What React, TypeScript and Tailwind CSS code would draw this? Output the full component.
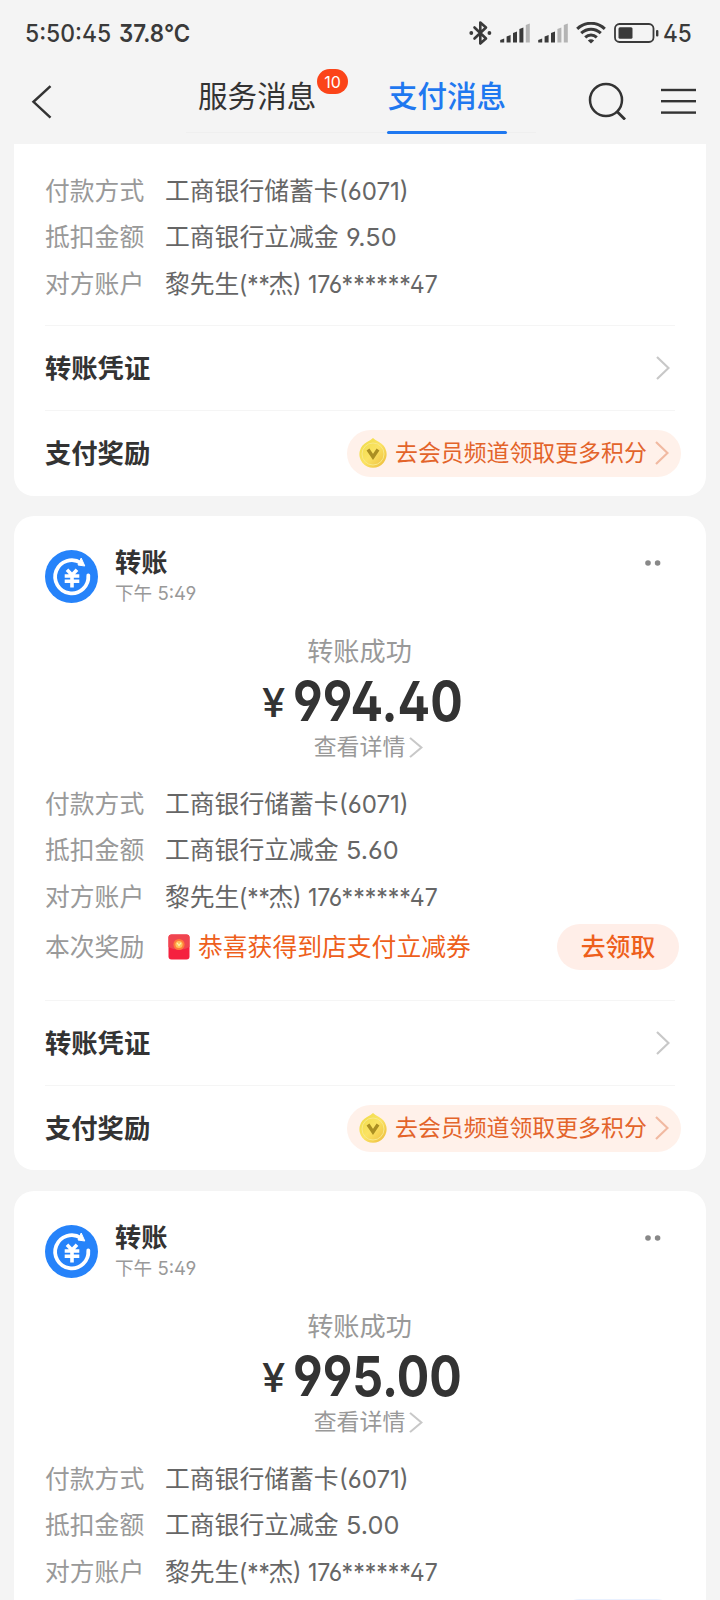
import React from "react";

const num = "font-['Inter','Noto_Sans_CJK_SC',sans-serif] [font-feature-settings:'ss01']";

/** Latin digits, stretched or condensed horizontally from their left edge. */
function Num({
  children,
  scale = "scale-x-[0.97]",
  className = "",
}: {
  children: React.ReactNode;
  scale?: string;
  className?: string;
}) {
  return <span className={`inline-block origin-left whitespace-pre ${scale} ${num} ${className}`}>{children}</span>;
}

function Chevron({ className, h = 24 }: { className: string; h?: number }) {
  return (
    <svg width={14} height={h} viewBox="0 0 14 24" preserveAspectRatio="none" fill="none" className={className}>
      <path d="M1 1 L12.5 12 L1 23" stroke="currentColor" strokeWidth="2.2" />
    </svg>
  );
}

function Signal({ level }: { level: number }) {
  const tops = [15.5, 12, 8.5, 4.5, 0.5];
  return (
    <svg width="30" height="20" viewBox="0 0 30 20">
      {tops.map((t, i) => (
        <path
          key={t}
          d={`M${i * 6.4 + 0.2} ${t + 1.6} L${i * 6.4 + 4.2} ${t} V19.5 H${i * 6.4 + 0.2} Z`}
          fill={i < level ? "#3a3a3a" : "#b4b4b4"}
        />
      ))}
    </svg>
  );
}

function StatusBar() {
  return (
    <div className="flex h-16 shrink-0 items-center pt-[2px] pl-[25px] text-[#3a3a3a]">
      <span className="w-[94px] text-[24px] font-medium">
        <Num scale="scale-x-[0.955]">5:50:45</Num>
      </span>
      <span className="w-[350px] text-[24px] font-semibold">
        <Num scale="scale-x-[0.93]">37.8°C</Num>
      </span>
      <svg width="23" height="26" viewBox="0 0 23 26" fill="none" className="mr-2">
        <path d="M5.5 7.5 L17 18.5 L11.3 23.5 V2.5 L17 7.5 L5.5 18.5" stroke="#3a3a3a" strokeWidth="2.6" strokeLinejoin="round" strokeLinecap="round" />
        <circle cx="2.3" cy="13" r="1.9" fill="#3a3a3a" />
        <circle cx="20.4" cy="13" r="1.9" fill="#3a3a3a" />
      </svg>
      <Signal level={4} />
      <span className="w-2" />
      <Signal level={3} />
      <svg width="30" height="22" viewBox="0 0 30 22" fill="none" className="mx-[8px]">
        <g stroke="#3a3a3a" strokeWidth="3">
          <path d="M1.2 6.9 C9 -0.6 21 -0.6 28.8 6.9" />
          <path d="M5.2 11.2 C11 5.8 19 5.8 24.8 11.2" />
          <path d="M9.2 15.4 C12.6 12.2 17.4 12.2 20.8 15.4" />
        </g>
        <path d="M11.8 18.4 Q15 16.2 18.2 18.4 L15 21.6 Z" fill="#3a3a3a" />
      </svg>
      <svg width="45" height="20" viewBox="0 0 45 20" fill="none" className="mr-[4px]">
        <rect x="1" y="1" width="38.5" height="18" rx="4.5" stroke="#3a3a3a" strokeWidth="1.8" />
        <rect x="4.5" y="4.2" width="14" height="11.6" rx="1.5" fill="#3a3a3a" />
        <rect x="42" y="7" width="2.4" height="6.5" rx="1" fill="#3a3a3a" />
      </svg>
      <span className="text-[24px] font-medium">
        <Num scale="scale-x-[0.94]">45</Num>
      </span>
    </div>
  );
}

function NavBar() {
  return (
    <div className="flex h-20 shrink-0 text-[#333]">
      <svg width="22" height="34" viewBox="0 0 22 34" fill="none" className="mt-[21px] ml-[31px] shrink-0">
        <path d="M19.5 1.2 L2.5 16.8 L19.5 32.6" stroke="#333" strokeWidth="2.5" />
      </svg>
      <div className="ml-[133px] flex h-[69px] w-[350px] shrink-0 border-b border-[#efefef]">
        <div className="relative ml-[12px] w-[122px] text-[29.6px] leading-[62px]">
          服务消息
          <span className={`absolute top-[5px] left-[119px] flex h-[25px] w-[31px] items-center justify-center rounded-full bg-[#fb4419] text-[16px] text-white ${num}`}>
            10
          </span>
        </div>
        <div className="ml-[67px] flex h-[70px] w-[120px] shrink-0 flex-col items-center justify-between text-[29.6px] leading-[62px] font-medium text-[#1f78f0]">
          <span className="h-[62px] whitespace-nowrap">支付消息</span>
          <span className="h-[3px] w-[120px] shrink-0 rounded-full bg-[#1f78f0]" />
        </div>
      </div>
      <svg width="38" height="38" viewBox="0 0 38 38" fill="none" className="mt-[18px] ml-[52px] shrink-0">
        <circle cx="18" cy="18" r="16" stroke="#333" strokeWidth="2.5" />
        <path d="M29 29.5 L37 37.5" stroke="#333" strokeWidth="2.8" />
      </svg>
      <svg width="35" height="26" viewBox="0 0 35 26" className="mt-[24px] ml-[35px] shrink-0" fill="#333">
        <rect y="0.8" width="35" height="2.4" />
        <rect y="12" width="35" height="2.4" />
        <rect y="23.4" width="35" height="2.4" />
      </svg>
    </div>
  );
}

function Row({ label, children }: { label: string; children: React.ReactNode }) {
  return (
    <div className="flex h-[46.4px] items-center pb-[3px] whitespace-nowrap text-[24.8px]">
      <span className="w-[120px] text-[#999]">{label}</span>
      <span className="pt-[2px] text-[#666]">{children}</span>
    </div>
  );
}

function Details({ discount }: { discount: string }) {
  return (
    <>
      <Row label="付款方式">
        工商银行储蓄卡<Num>(6071)</Num>
      </Row>
      <Row label="抵扣金额">
        工商银行立减金<Num scale="scale-x-[1.02]"> {discount}</Num>
      </Row>
      <Row label="对方账户">
        黎先生<Num scale="scale-x-[0.91]" className="w-[29px]">(**</Num>杰<Num scale="scale-x-[0.93]">) 176******47</Num>
      </Row>
    </>
  );
}

function Coin() {
  return (
    <svg width="28" height="32" viewBox="0 0 28 32" fill="none">
      <defs>
        <linearGradient id="coin" x1="0" y1="0" x2="1" y2="1">
          <stop offset="0" stopColor="#eedb45" />
          <stop offset="0.5" stopColor="#fbe363" />
          <stop offset="1" stopColor="#ecb93a" />
        </linearGradient>
      </defs>
      <path d="M14 1 Q16 3 20 5 A13.6 13.6 0 1 1 8 5 Q12 3 14 1 Z" fill="url(#coin)" />
      <circle cx="14" cy="17" r="11" stroke="#f8e98a" strokeWidth="1" />
      <path d="M9 12.5 L14 20 L19 12.5" stroke="#ab8f22" strokeWidth="3.4" />
    </svg>
  );
}

function Footer() {
  return (
    <>
      <div className="mr-[31px] flex h-[85px] items-center justify-between border-t border-[#f5f5f5] pr-[5px]">
        <span className="pb-[3px] text-[26.3px] font-bold text-[#333]">转账凭证</span>
        <Chevron className="text-[#c8c8c8]" />
      </div>
      <div className="mr-[31px] flex h-[85px] items-center justify-between border-t border-[#f5f5f5]">
        <span className="pb-[3px] text-[26.3px] font-bold text-[#333]">支付奖励</span>
        <div className="-mr-[6px] flex h-[47px] w-[334px] shrink-0 items-center rounded-full bg-[#fff1ea] pl-[12px]">
          <Coin />
          <span className="ml-[8px] w-[260px] pb-[3px] whitespace-nowrap text-[22.9px] text-[#e3642a]">去会员频道领取更多积分</span>
          <Chevron className="text-[#f1b9a1]" />
        </div>
      </div>
    </>
  );
}

function Envelope() {
  return (
    <svg width="22" height="26" viewBox="0 0 22 26" className="mr-[8px] ml-[3px]">
      <rect x="0.5" y="0.5" width="21" height="25" rx="3" fill="#f5203f" />
      <path d="M0.5 3.5 Q0.5 0.5 3.5 0.5 H18.5 Q21.5 0.5 21.5 3.5 V13 Q11 19 0.5 13 Z" fill="#f0454f" />
      <circle cx="11" cy="10.5" r="5.6" fill="#ff7a3c" />
      <circle cx="11" cy="10.5" r="3.6" fill="#ffc35a" />
      <path d="M9 8.8 L11 11.5 L13 8.8" stroke="#fff0b0" strokeWidth="1.2" fill="none" />
    </svg>
  );
}

function Head({ amount }: { amount: string }) {
  return (
    <>
      <div className="flex h-[59px]">
        <svg width="53" height="53" viewBox="0 0 53 53" fill="none" className="mt-[3px]">
          <circle cx="26.5" cy="26.5" r="26.5" fill="#2683fa" />
          <path d="M36 13 A16.6 16.6 0 1 0 43.3 25.5" stroke="#fff" strokeWidth="3.8" strokeLinecap="round" />
          <path d="M36.2 8 L39.8 16 L33 15 Z" fill="#fff" stroke="#fff" strokeLinejoin="round" />
          <path d="M22 19.8 L27 25 L32 19.8 M19.7 26 H34.3 M19.7 31.2 H34.3 M27 25 V37.5" stroke="#fff" strokeWidth="3.6" />
        </svg>
        <div className="ml-[17px] flex flex-1 flex-col whitespace-nowrap">
          <span className="h-[33px] text-[26.2px] leading-[28px] font-bold text-[#333]">转账</span>
          <span className="h-[26px] text-[18.6px] leading-[24px] text-[#999]">
            下午<Num scale="scale-x-[1.0]"> 5:49</Num>
          </span>
        </div>
        <svg width="16" height="6" viewBox="0 0 16 6" fill="#888" className="mt-[13px] mr-[45px]">
          <circle cx="3" cy="3" r="2.8" />
          <circle cx="12.6" cy="3" r="2.8" />
        </svg>
      </div>
      <div className="mt-[27px] mr-[31px] flex flex-col items-center">
        <span className="h-[36px] pr-[1px] text-[26.2px] leading-[34px] text-[#999]">转账成功</span>
        <div className="flex h-[62px] w-[196px] items-center leading-[44px] text-[#333]">
          <span className={`w-[31px] shrink-0 pt-[6px] text-[39px] leading-[38px] font-medium ${num}`}>
            <span className="inline-block origin-left scale-x-[1.07]">¥</span>
          </span>
          <span className={`inline-block w-[165px] origin-left scale-x-[0.885] pt-[1px] text-[54.5px] leading-[44px] font-bold ${num}`}>{amount}</span>
        </div>
        <div className="flex h-[32px] items-center pl-[17px] text-[22.9px] text-[#999]">
          <span className="mr-[4px] pb-[3px]">查看详情</span>
          <Chevron h={21} className="text-[#c8c8c8]" />
        </div>
      </div>
    </>
  );
}

export default function App() {
  return (
    <div className="flex h-[1600px] w-[720px] flex-col overflow-hidden bg-[#f4f4f4] font-['Noto_Sans_CJK_SC',sans-serif]">
      <StatusBar />
      <NavBar />
      <main className="flex flex-col px-[14px]">
        <section className="h-[352px] shrink-0 rounded-b-[20px] bg-white pt-[24px] pl-[31px]">
          <Details discount="9.50" />
          <div className="h-[18px]" />
          <Footer />
        </section>
        <section className="mt-[20px] h-[654px] shrink-0 rounded-[20px] bg-white pt-[31px] pl-[31px]">
          <Head amount="994.40" />
          <div className="h-[18px]" />
          <Details discount="5.60" />
          <div className="flex h-[54px] items-center whitespace-nowrap text-[24.8px]">
            <span className="w-[120px] pb-[3px] text-[#999]">本次奖励</span>
            <Envelope />
            <span className="flex-1 pb-[3px] text-[#ee5f1c]">恭喜获得到店支付立减券</span>
            <button className="mr-[27px] h-[46px] w-[122px] rounded-full bg-[#ffeee8] pb-[3px] font-medium text-[#ee5f1c]">去领取</button>
          </div>
          <div className="h-[26px]" />
          <Footer />
        </section>
        <section className="mt-[21px] h-[654px] shrink-0 rounded-[20px] bg-white pt-[31px] pl-[31px]">
          <Head amount="995.00" />
          <div className="h-[18px]" />
          <Details discount="5.00" />
          <div className="flex h-[54px] items-center justify-end">
            <span className="mr-[27px] h-[46px] w-[122px] rounded-full bg-[#e9f1ff]" />
          </div>
        </section>
      </main>
    </div>
  );
}
